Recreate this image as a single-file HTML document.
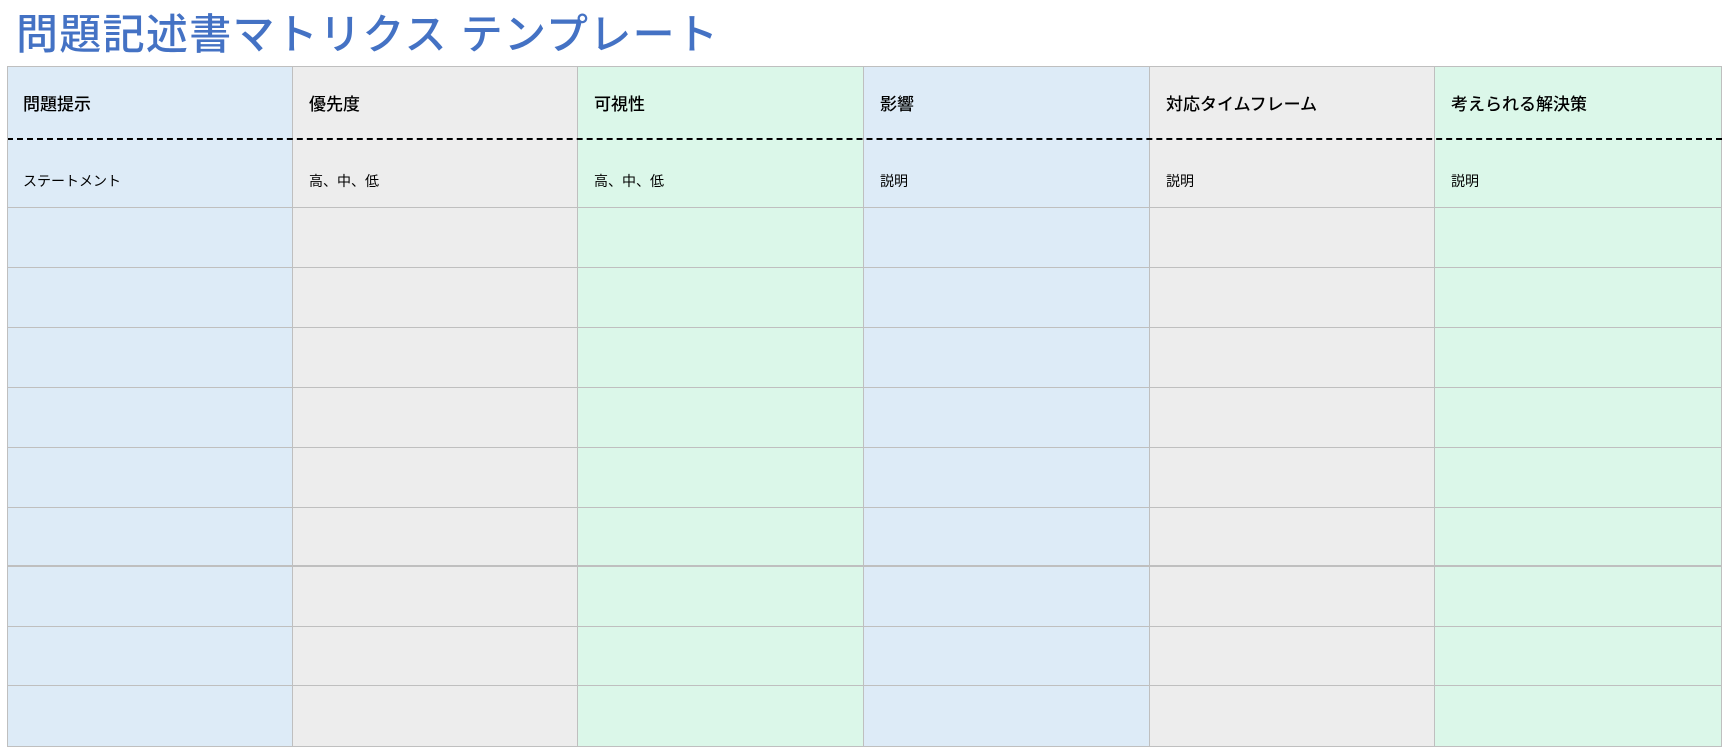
<!DOCTYPE html>
<html><head><meta charset="utf-8"><style>
body{margin:0;width:1730px;height:754px;background:#fff;position:relative;overflow:hidden;font-family:"Liberation Sans","Noto Sans CJK JP",sans-serif;color:#000}
.t{position:absolute;left:16px;top:5px;font-size:42px;font-weight:500;color:#4472C4;line-height:60px;white-space:nowrap;letter-spacing:1.3px}
.c{position:absolute;box-sizing:border-box;border-right:1px solid #bfbfbf;border-bottom:1px solid #bfbfbf}
.h{font-size:17px;line-height:20px;position:absolute;white-space:nowrap;font-weight:500}
.s{font-size:14px;line-height:18px;position:absolute;white-space:nowrap}
</style></head><body>
<div class="t">問題記述書マトリクス テンプレート</div>
<div id="g"></div>
<div style="position:absolute;left:7px;top:138px;width:1715px;height:0;border-top:2px dashed #000"></div>
<div style="position:absolute;left:7px;top:66px;width:1715px;height:681px;border-left:1px solid #bfbfbf;border-top:1px solid #bfbfbf;box-sizing:border-box;pointer-events:none"></div>
<script>
var xs=[7,293,578,864,1150,1435,1722];
var ys=[66,208,268,328,388,448,508,567,627,686,747];
var cols=["#DDEBF7","#EDEDED","#DBF7E9","#DDEBF7","#EDEDED","#DBF7E9"];
var hd=["問題提示","優先度","可視性","影響","対応タイムフレーム","考えられる解決策"];
var sb=["ステートメント","高、中、低","高、中、低","説明","説明","説明"];
var h="";
for(var i=0;i<6;i++){for(var r=0;r<ys.length-1;r++){
var bb=(r==6)?"border-bottom:2px solid #bfbfbf;":"";
h+='<div class="c" style="left:'+xs[i]+'px;top:'+ys[r]+'px;width:'+(xs[i+1]-xs[i])+'px;height:'+(ys[r+1]-ys[r])+'px;background:'+cols[i]+';'+bb+'"></div>';}
h+='<div class="h" style="left:'+(xs[i]+16)+'px;top:95px">'+hd[i]+'</div>';
h+='<div class="s" style="left:'+(xs[i]+16)+'px;top:172px">'+sb[i]+'</div>';}
document.getElementById("g").innerHTML=h;
</script>
</body></html>
